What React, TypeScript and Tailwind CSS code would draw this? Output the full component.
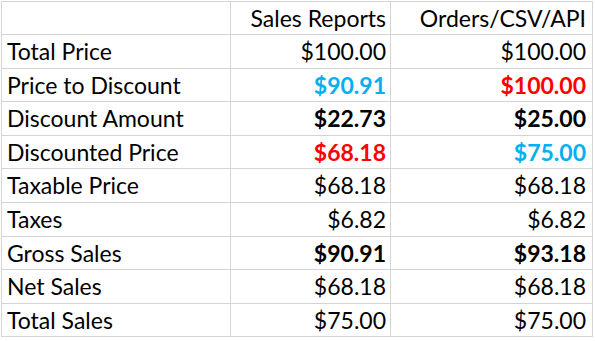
import React from "react";

type Cell = { v: string; c?: "blue" | "red"; b?: boolean };
type Row = { label: string; a: Cell; o: Cell; h: string };

const rows: Row[] = [
  { label: "Total Price", a: { v: "$100.00" }, o: { v: "$100.00" }, h: "h-[34px]" },
  { label: "Price to Discount", a: { v: "$90.91", c: "blue", b: true }, o: { v: "$100.00", c: "red", b: true }, h: "h-[33px]" },
  { label: "Discount Amount", a: { v: "$22.73", b: true }, o: { v: "$25.00", b: true }, h: "h-[34px]" },
  { label: "Discounted Price", a: { v: "$68.18", c: "red", b: true }, o: { v: "$75.00", c: "blue", b: true }, h: "h-[33px]" },
  { label: "Taxable Price", a: { v: "$68.18" }, o: { v: "$68.18" }, h: "h-[34px]" },
  { label: "Taxes", a: { v: "$6.82" }, o: { v: "$6.82" }, h: "h-[34px]" },
  { label: "Gross Sales", a: { v: "$90.91", b: true }, o: { v: "$93.18", b: true }, h: "h-[33px]" },
  { label: "Net Sales", a: { v: "$68.18" }, o: { v: "$68.18" }, h: "h-[34px]" },
  { label: "Total Sales", a: { v: "$75.00" }, o: { v: "$75.00" }, h: "h-[33px]" },
];

function cls(c: Cell) {
  const color = c.c === "blue" ? "text-[#00b0f0]" : c.c === "red" ? "text-[#ff0000]" : "text-black";
  return `${color} ${c.b ? "font-bold" : "font-normal"}`;
}

export default function App() {
  return (
    <div className="w-[595px] h-[341px] bg-white overflow-hidden">
      <div
        className="ml-[1px] mt-[1px] w-[592px] border-t border-l border-[#d4d4d4] text-[23px] leading-[23px] text-black"
        style={{ fontFamily: "Lato, 'Open Sans', sans-serif" }}
      >
        <div className="flex h-[33px]">
          <div className="w-[229px] border-r border-b border-[#d4d4d4]" />
          <div className="w-[160px] border-r border-b border-[#d4d4d4] pt-[5px] pr-[4px] text-right">Sales Reports</div>
          <div className="w-[202px] border-r border-b border-[#d4d4d4] pt-[5px] pr-[6px] text-right">Orders/CSV/API</div>
        </div>
        {rows.map((r) => (
          <div key={r.label} className={`flex ${r.h}`}>
            <div className="w-[229px] border-r border-b border-[#d4d4d4] pt-[5px] pl-[5px]">{r.label}</div>
            <div className={`w-[160px] border-r border-b border-[#d4d4d4] pt-[5px] pr-[4px] text-right ${cls(r.a)}`}>{r.a.v}</div>
            <div className={`w-[202px] border-r border-b border-[#d4d4d4] pt-[5px] pr-[6px] text-right ${cls(r.o)}`}>{r.o.v}</div>
          </div>
        ))}
      </div>
    </div>
  );
}
